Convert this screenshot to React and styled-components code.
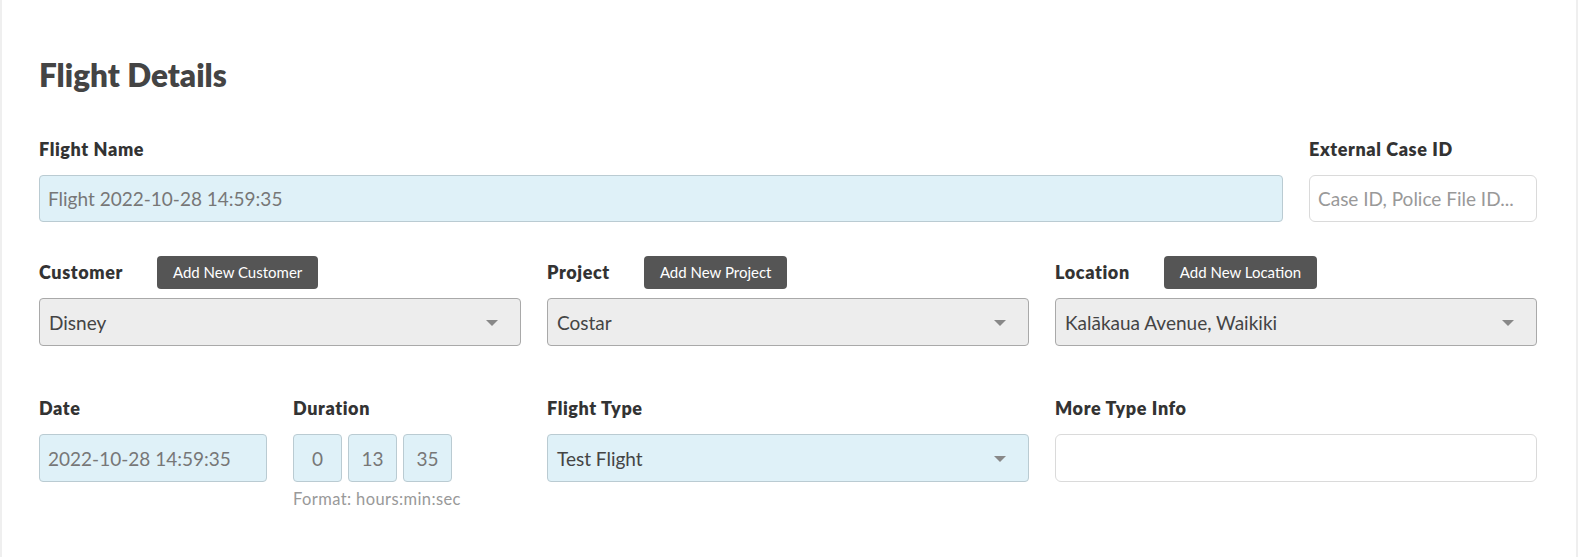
import React from 'react';
import styled, { createGlobalStyle, css } from 'styled-components';

const GlobalStyle = createGlobalStyle`
  html, body {
    margin: 0;
    padding: 0;
    background: #efefef;
    font-family: Lato, "Noto Sans", sans-serif;
    overflow: hidden;
  }
`;

const Card = styled.div`
  margin-left: 2px;
  width: 1574px;
  height: 100vh;
  box-sizing: border-box;
  background: #fff;
  padding: 53px 39px 0 37px;
`;

const Title = styled.h2`
  margin: 0 0 36px;
  font-size: 31.5px;
  height: 44px;
  display: flex;
  align-items: center;
  font-weight: 800;
  color: #444;
`;

const Grid = styled.div`
  display: grid;
  grid-template-columns: repeat(6, 1fr);
  column-gap: 26px;
  margin-bottom: ${p => p.$gap || 0}px;
`;

const Field = styled.div`
  grid-column: span ${p => p.$span || 1};
  display: flex;
  flex-direction: column;
  gap: 10px;
  min-width: 0;
`;

const Header = styled.div`
  height: 32px;
  display: flex;
  align-items: center;
  gap: 34px;
`;

const Label = styled.label`
  font-size: 18px;
  letter-spacing: 0.6px;
  font-weight: 800;
  color: #333;
  white-space: nowrap;
`;

const AddButton = styled.button`
  height: 33px;
  padding: 0 16px;
  border: none;
  border-radius: 4px;
  background: #555;
  color: #fff;
  font-family: Lato, "Noto Sans", sans-serif;
  font-size: 15px;
  white-space: nowrap;
`;

const boxBase = css`
  box-sizing: border-box;
  height: ${p => p.$h || 48}px;
  border-radius: 4px;
  font-family: Lato, "Noto Sans", sans-serif;
  font-size: 19px;
  display: flex;
  align-items: center;
  padding: 0 8px;
  white-space: nowrap;
  overflow: hidden;
`;

const TextBox = styled.div`
  ${boxBase}
  ${p => p.$tone === 'blue' && css`
    background: #dff1f8;
    border: 1px solid #bacbd2;
    color: #777;
  `}
  ${p => p.$tone === 'white' && css`
    background: #fff;
    border: 1px solid #dadada;
    border-radius: 6px;
    color: #999;
  `}
`;

const Select = styled.div`
  ${boxBase}
  justify-content: space-between;
  padding: 0 22px 0 9px;
  color: #444;
  background: ${p => (p.$tone === 'blue' ? '#dff1f8' : '#ededed')};
  border: 1px solid ${p => (p.$tone === 'blue' ? '#bacbd2' : '#a9a9a9')};
`;

const Caret = styled.span`
  width: 0;
  height: 0;
  border-left: 6px solid transparent;
  border-right: 6px solid transparent;
  border-top: 6px solid #888;
  margin-top: 2px;
`;

const DurationRow = styled.div`
  display: flex;
  gap: 6px;
`;

const DurationBox = styled.div`
  ${boxBase}
  width: 49px;
  justify-content: center;
  padding: 0;
  background: #dff1f8;
  border: 1px solid #bacbd2;
  color: #777;
`;

const Hint = styled.div`
  margin-top: -3px;
  font-size: 16.5px;
  letter-spacing: 0.4px;
  color: #999;
`;

const SelectField = ({ value, tone }) => (
  <Select $tone={tone}>
    <span>{value}</span>
    <Caret />
  </Select>
);

export default function App() {
  return (
    <>
      <GlobalStyle />
      <Card>
        <Title>Flight Details</Title>

        <Grid $gap={34}>
          <Field $span={5}>
            <Header><Label>Flight Name</Label></Header>
            <TextBox $h={47} $tone="blue">Flight 2022-10-28 14:59:35</TextBox>
          </Field>
          <Field>
            <Header><Label>External Case ID</Label></Header>
            <TextBox $h={47} $tone="white">Case ID, Police File ID...</TextBox>
          </Field>
        </Grid>

        <Grid $gap={46}>
          <Field $span={2}>
            <Header>
              <Label>Customer</Label>
              <AddButton>Add New Customer</AddButton>
            </Header>
            <SelectField value="Disney" />
          </Field>
          <Field $span={2}>
            <Header>
              <Label>Project</Label>
              <AddButton>Add New Project</AddButton>
            </Header>
            <SelectField value="Costar" />
          </Field>
          <Field $span={2}>
            <Header>
              <Label>Location</Label>
              <AddButton>Add New Location</AddButton>
            </Header>
            <SelectField value="Kalākaua Avenue, Waikiki" />
          </Field>
        </Grid>

        <Grid>
          <Field>
            <Header><Label>Date</Label></Header>
            <TextBox $tone="blue">2022-10-28 14:59:35</TextBox>
          </Field>
          <Field>
            <Header><Label>Duration</Label></Header>
            <DurationRow>
              <DurationBox>0</DurationBox>
              <DurationBox>13</DurationBox>
              <DurationBox>35</DurationBox>
            </DurationRow>
            <Hint>Format: hours:min:sec</Hint>
          </Field>
          <Field $span={2}>
            <Header><Label>Flight Type</Label></Header>
            <SelectField value="Test Flight" tone="blue" />
          </Field>
          <Field $span={2}>
            <Header><Label>More Type Info</Label></Header>
            <TextBox $tone="white" />
          </Field>
        </Grid>
      </Card>
    </>
  );
}
